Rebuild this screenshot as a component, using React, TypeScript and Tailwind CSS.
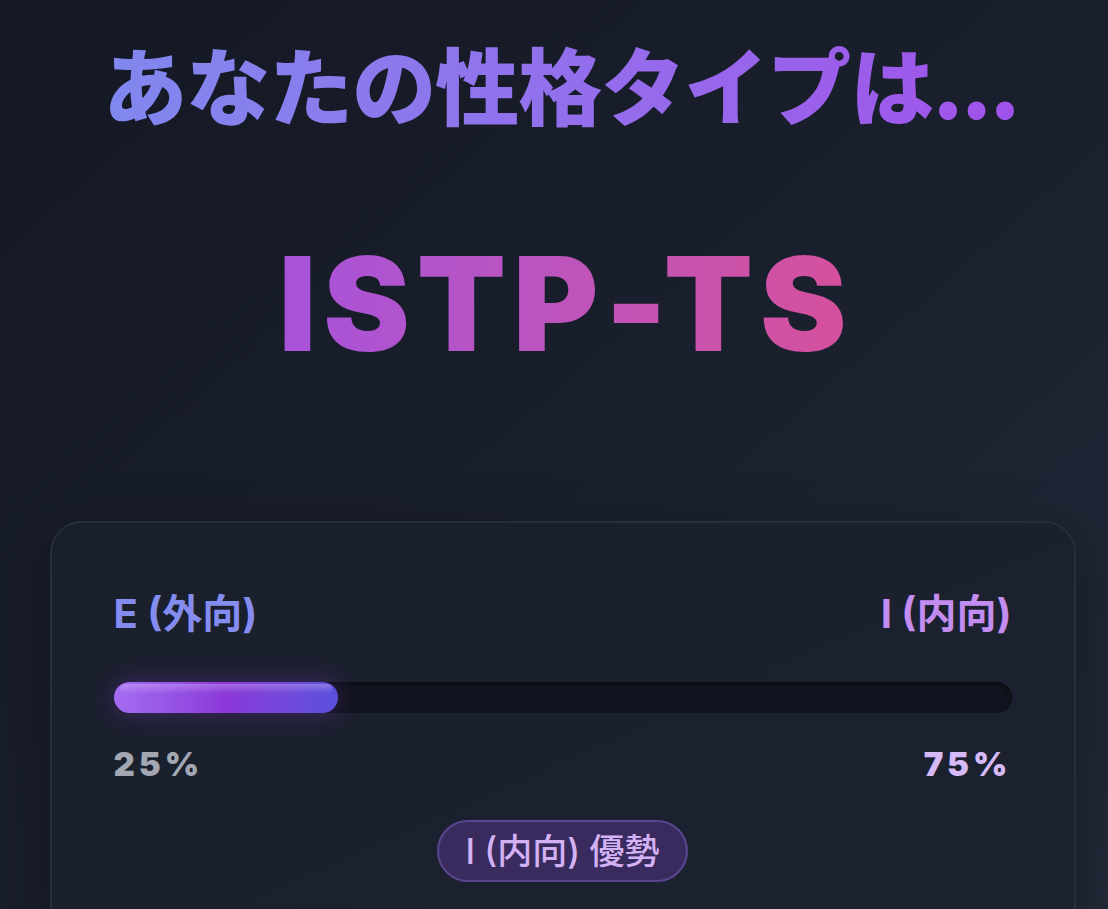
import React from "react";

const jp = { fontFamily: 'Inter, "Noto Sans CJK JP", sans-serif' };
const cjk = { fontFamily: '"Noto Sans CJK JP", sans-serif' };

export default function App() {
  const e = 25;
  const i = 100 - e;

  return (
    <div
      className="min-h-[909px] w-full overflow-hidden bg-gradient-to-br from-[#141824] via-[#1a1f2d] to-[#242a3a] flex flex-col items-center pl-[17px]"
      style={jp}
    >
      {/* Title */}
      <h1
        className="mt-[33px] -ml-[3px] text-[84px] leading-[100px] font-black bg-gradient-to-r from-[#8088ee] to-[#a052ea] bg-clip-text text-transparent tracking-[-1px]"
        style={cjk}
      >
        あなたの性格タイプは...
      </h1>

      {/* Type */}
      <div className="mt-[101px] pl-[7px] text-[130px] leading-[140px] font-black tracking-[7px] bg-gradient-to-r from-[#a652db] to-[#d6509c] bg-clip-text text-transparent">
        ISTP-TS
      </div>

      {/* Card */}
      <div className="mt-[147px] w-[1026px] rounded-[32px] border-2 border-[#272d3c] bg-gradient-to-br from-[#1a1f2c] to-[#1d2231] px-[62px] pt-[71px] pb-[90px] shadow-[0_20px_60px_rgba(0,0,0,0.35)]">
        <div className="flex justify-between text-[40px] leading-[40px] font-bold">
          <span className="text-[#848cf0]">E (外向)</span>
          <span className="text-[#c28cf0]">I (内向)</span>
        </div>

        <div className="mt-[48px] h-[31px] rounded-full bg-[#11141e] shadow-[inset_0_2px_4px_rgba(0,0,0,0.5)] relative">
          <div
            className="h-full rounded-full bg-gradient-to-r from-[#a46cf2] via-[#8a38d8] to-[#5a50dc] relative shadow-[0_0_24px_rgba(140,60,220,0.35)]"
            style={{ width: `${e}%` }}
          >
            <div className="absolute inset-x-[6px] top-[2px] h-[10px] rounded-full bg-gradient-to-b from-white/25 to-transparent" />
          </div>
        </div>

        <div className="mt-[33px] flex justify-between text-[33px] leading-[36px] font-black tracking-[4px]">
          <span className="text-[#a3a7b2]">{e}%</span>
          <span className="text-[#d6baf8]">{i}%</span>
        </div>

        <div className="mt-[38px] flex justify-center">
          <span className="px-[26px] h-[62px] flex items-center rounded-full bg-[#3a2b5e] border-2 border-[#5a4690] text-[#d2b2f4] text-[35px] font-medium">
            I (内向) 優勢
          </span>
        </div>
      </div>
    </div>
  );
}
